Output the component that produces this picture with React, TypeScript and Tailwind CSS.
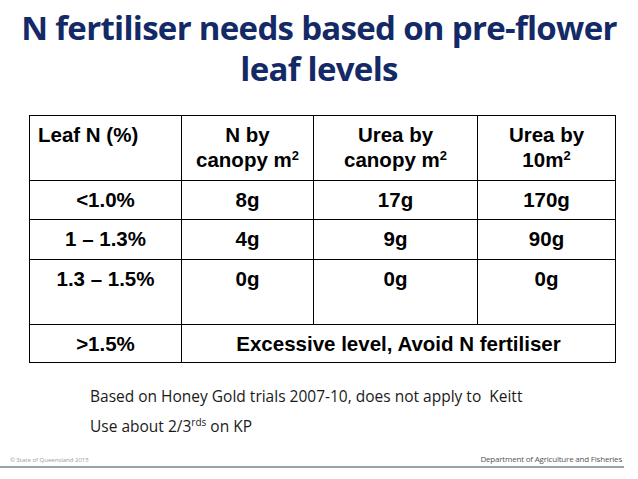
import React from "react";

export default function App() {
  const cell = "border-[1.5px] border-black align-top";
  const sup2 = <span className="text-[13px] align-[7px] leading-none">2</span>;
  return (
    <div className="w-[638px] h-[479px] bg-white relative overflow-hidden flex flex-col">
      <h1
        className="text-center text-[#142a66] font-bold text-[33px] leading-[41px] pt-[7px] tracking-[-0.7px]"
        style={{ fontFamily: '"Open Sans", sans-serif' }}
      >
        N fertiliser needs based on pre-flower
        <br />
        leaf levels
      </h1>
      <div className="pl-[29px] mt-[26px]">
        <table
          className="table-fixed border-collapse text-black font-bold text-[20.5px] leading-[25px]"
          style={{ fontFamily: '"Liberation Sans", Arial, sans-serif' }}
        >
          <colgroup>
            <col className="w-[152px]" />
            <col className="w-[132px]" />
            <col className="w-[164px]" />
            <col className="w-[138px]" />
          </colgroup>
          <tbody>
            <tr className="h-[65px]">
              <td className={`${cell} text-left pl-[8px] pt-[6px]`}>Leaf N (%)</td>
              <td className={`${cell} text-center pt-[6px]`}>
                N by
                <br />
                canopy m{sup2}
              </td>
              <td className={`${cell} text-center pt-[6px]`}>
                Urea by
                <br />
                canopy m{sup2}
              </td>
              <td className={`${cell} text-center pt-[6px]`}>
                Urea by
                <br />
                10m{sup2}
              </td>
            </tr>
            <tr className="h-[39px]">
              <td className={`${cell} text-center pt-[6px]`}>&lt;1.0%</td>
              <td className={`${cell} text-center pt-[6px]`}>8g</td>
              <td className={`${cell} text-center pt-[6px]`}>17g</td>
              <td className={`${cell} text-center pt-[6px]`}>170g</td>
            </tr>
            <tr className="h-[40px]">
              <td className={`${cell} text-center pt-[6px]`}>1 – 1.3%</td>
              <td className={`${cell} text-center pt-[6px]`}>4g</td>
              <td className={`${cell} text-center pt-[6px]`}>9g</td>
              <td className={`${cell} text-center pt-[6px]`}>90g</td>
            </tr>
            <tr className="h-[65px]">
              <td className={`${cell} text-center pt-[6px]`}>1.3 – 1.5%</td>
              <td className={`${cell} text-center pt-[6px]`}>0g</td>
              <td className={`${cell} text-center pt-[6px]`}>0g</td>
              <td className={`${cell} text-center pt-[6px]`}>0g</td>
            </tr>
            <tr className="h-[38px]">
              <td className={`${cell} text-center pt-[6px]`}>&gt;1.5%</td>
              <td className={`${cell} text-center pt-[6px]`} colSpan={3}>
                Excessive level, Avoid N fertiliser
              </td>
            </tr>
          </tbody>
        </table>
      </div>
      <div
        className="pl-[90px] mt-[18px] text-[#1a1a1a] text-[15.5px] leading-[30px]"
        style={{ fontFamily: '"Open Sans", sans-serif' }}
      >
        <p>Based on Honey Gold trials 2007-10, does not apply to&nbsp; Keitt</p>
        <p>
          Use about 2/3<span className="text-[10px] align-[6px] leading-none">rds</span> on KP
        </p>
      </div>
      <div className="mt-auto mb-[11px]">
        <div
          className="flex items-end justify-between pl-[10px] w-[622px]"
          style={{ fontFamily: '"Open Sans", sans-serif' }}
        >
          <span className="text-[6px] text-[#9a9a9a]">© State of Queensland 2015</span>
          <span className="text-[8px] text-[#555] tracking-[-0.2px]">
            Department of Agriculture and Fisheries
          </span>
        </div>
        <div className="h-[2px] bg-[#9aa3a3] w-[624px] mt-[1px]" />
      </div>
    </div>
  );
}
